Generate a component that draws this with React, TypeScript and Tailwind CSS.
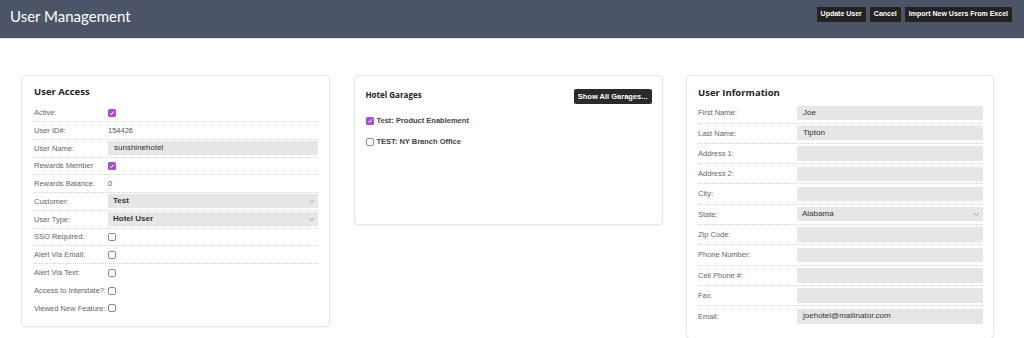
import React from 'react';
import { ChevronDown } from 'lucide-react';

function Check({ on }: { on?: boolean }) {
    if (on) {
        return (
            <span className="inline-flex w-[8px] h-[8px] rounded-[1.5px] bg-[#a54fcf] items-center justify-center">
                <svg width="6" height="6" viewBox="0 0 12 12">
                    <path d="M2.5 6.5 L5 9 L9.5 3" fill="none" stroke="white" strokeWidth="2" />
                </svg>
            </span>
        );
    }
    return <span className="inline-block w-[8px] h-[8px] rounded-[2px] border border-[#8a8a8a] bg-white" />;
}

function Field({ value = '' }: { value?: string }) {
    return (
        <div className="flex-1 h-[14.5px] bg-[#e6e6e6] rounded-[1px] flex items-center px-[6px] text-[8px] text-[#333]">
            {value}
        </div>
    );
}

function Select({ value, bold }: { value: string; bold?: boolean }) {
    return (
        <div className={`flex-1 h-[14px] bg-[#e6e6e6] rounded-[1px] flex items-center justify-between pl-[5px] pr-[3px] text-[8px] text-[#333] ${bold ? 'font-semibold' : ''}`}>
            <span>{value}</span>
            <ChevronDown size={7} strokeWidth={2.5} className="text-[#777]" />
        </div>
    );
}

type Row = { label: string; kind: 'check' | 'text' | 'input' | 'select'; on?: boolean; value?: string; bold?: boolean; line?: boolean };

const accessRows: Row[] = [
    { label: 'Active:', kind: 'check', on: true, line: true },
    { label: 'User ID#:', kind: 'text', value: '154426', line: true },
    { label: 'User Name:', kind: 'input', value: 'sunshinehotel', line: true },
    { label: 'Rewards Member', kind: 'check', on: true, line: true },
    { label: 'Rewards Balance:', kind: 'text', value: '0', line: true },
    { label: 'Customer:', kind: 'select', value: 'Test', bold: true, line: true },
    { label: 'User Type:', kind: 'select', value: 'Hotel User', bold: true, line: true },
    { label: 'SSO Required:', kind: 'check', line: true },
    { label: 'Alert Via Email:', kind: 'check', line: true },
    { label: 'Alert Via Text:', kind: 'check' },
    { label: 'Access to Interstate?:', kind: 'check' },
    { label: 'Viewed New Feature:', kind: 'check' },
];

const infoRows: Row[] = [
    { label: 'First Name:', kind: 'input', value: 'Joe' },
    { label: 'Last Name:', kind: 'input', value: 'Tipton' },
    { label: 'Address 1:', kind: 'input' },
    { label: 'Address 2:', kind: 'input' },
    { label: 'City:', kind: 'input' },
    { label: 'State:', kind: 'select', value: 'Alabama' },
    { label: 'Zip Code:', kind: 'input' },
    { label: 'Phone Number:', kind: 'input' },
    { label: 'Cell Phone #:', kind: 'input' },
    { label: 'Fax:', kind: 'input' },
    { label: 'Email:', kind: 'input', value: 'joehotel@mailinator.com' },
];

function RowView({ row, labelW, h, line }: { row: Row; labelW: string; h: string; line: boolean }) {
    return (
        <div className={`flex items-center ${h} ${line ? 'border-b border-dotted border-[#d4d4d4]' : ''}`}>
            <div className={`${labelW} shrink-0 text-[7.5px] text-[#666]`}>{row.label}</div>
            {row.kind === 'check' && <Check on={row.on} />}
            {row.kind === 'text' && <span className="text-[7.5px] text-[#555]">{row.value}</span>}
            {row.kind === 'input' && <Field value={row.value} />}
            {row.kind === 'select' && <Select value={row.value || ''} bold={row.bold} />}
        </div>
    );
}

export default function App() {
    return (
        <div className="w-[1024px] h-[338px] overflow-hidden bg-white font-['Liberation_Sans',Arial,sans-serif]">
            {/* Header */}
            <header className="h-[39px] bg-[#4b5567] border-b border-[#e3e5ea] flex items-center justify-between pl-[10px] pr-[12px]">
                <h1 className="text-[15px] text-white font-['Lato',sans-serif] pb-[5px]">User Management</h1>
                <div className="flex gap-[4px] -mt-[9px]">
                    {['Update User', 'Cancel', 'Import New Users From Excel'].map((t) => (
                        <button key={t} className="h-[15px] px-[4px] bg-[#222] rounded-[1px] text-white text-[7px] font-bold">
                            {t}
                        </button>
                    ))}
                </div>
            </header>

            <main className="flex items-start gap-[23.5px] pl-[21px] pt-[36px]">
                {/* User Access */}
                <section className="w-[309px] border border-[#e6e6e6] rounded-[4px] shadow-[0_1px_2px_rgba(0,0,0,0.06)] pl-[12px] pr-[11px] pt-[9px] pb-[9px]">
                    <h2 className="text-[9.5px] font-bold text-[#222] font-['Open_Sans',sans-serif] mb-[5px]">User Access</h2>
                    {accessRows.map((r) => (
                        <RowView key={r.label} row={r} labelW="w-[74px]" h="h-[17.75px]" line={!!r.line} />
                    ))}
                </section>

                {/* Hotel Garages */}
                <section className="w-[309px] h-[150px] border border-[#e6e6e6] rounded-[4px] shadow-[0_1px_2px_rgba(0,0,0,0.06)] pl-[11px] pr-[10px] pt-[13px]">
                    <div className="flex items-start justify-between">
                        <h2 className="text-[8px] font-bold text-[#222] font-['Open_Sans',sans-serif]">Hotel Garages</h2>
                        <button className="h-[15px] px-[4px] bg-[#2a2a2a] rounded-[2px] text-white text-[7.5px] font-bold">Show All Garages...</button>
                    </div>
                    <div className="mt-[11px] flex flex-col gap-[10px]">
                        <label className="flex items-center gap-[3px] text-[7.5px] font-bold text-[#444]">
                            <Check on />
                            Test: Product Enablement
                        </label>
                        <label className="flex items-center gap-[3px] text-[7.5px] font-bold text-[#444]">
                            <Check />
                            TEST: NY Branch Office
                        </label>
                    </div>
                </section>

                {/* User Information */}
                <section className="w-[308px] border border-[#e6e6e6] rounded-[4px] shadow-[0_1px_2px_rgba(0,0,0,0.06)] pl-[11px] pr-[10px] pt-[10px] pb-[11px]">
                    <h2 className="text-[9.5px] font-bold text-[#222] font-['Open_Sans',sans-serif] mb-[3px]">User Information</h2>
                    {infoRows.map((r, i) => (
                        <RowView key={r.label} row={r} labelW="w-[99px]" h="h-[20.3px]" line={i < infoRows.length - 1} />
                    ))}
                </section>
            </main>
        </div>
    );
}
